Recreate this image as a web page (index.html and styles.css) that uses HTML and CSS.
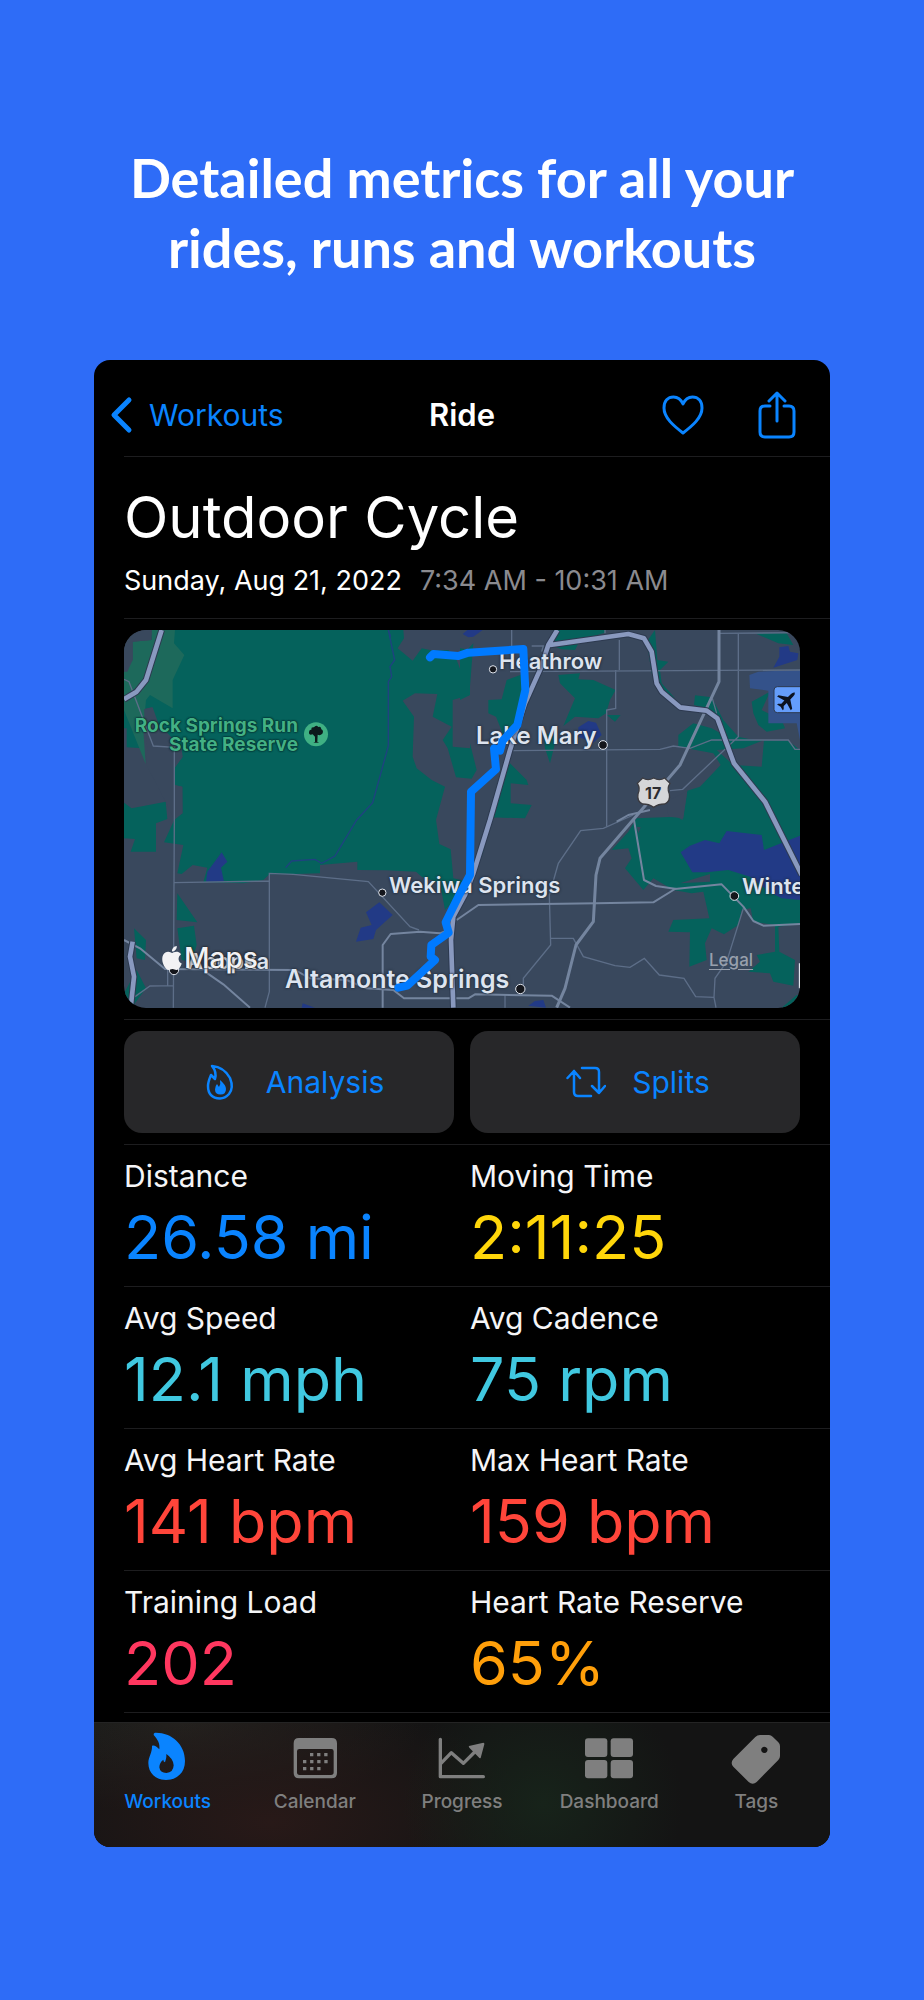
FILE: index.html
```html
<!DOCTYPE html>
<html lang="en">
<head>
  <meta charset="UTF-8">
  <meta name="viewport" content="width=device-width, initial-scale=1.0">
  <title>Outdoor Cycle</title>
  <link rel="stylesheet" href="styles.css">
</head>
<body>

  <h1 class="headline">Detailed metrics for all your<br>rides, runs and workouts</h1>

  <main class="phone">
    <header class="navbar">
      <a href="#" class="back">
        <svg width="24" height="38" viewBox="0 0 24 38"><path d="M19 4L4 19l15 15" fill="none" stroke="currentColor" stroke-width="5" stroke-linecap="round" stroke-linejoin="round"/></svg>
        Workouts
      </a>
      <h2>Ride</h2>
      <div class="nav-actions">
        <button aria-label="Favorite">
          <svg width="42" height="40" viewBox="0 0 42 40"><path d="M21 38C12 31 2 23 2 13 2 6 6 2 11.500 2 16 2 19 4.500 21 9c2-4.500 5-7 9.500-7C36 2 40 6 40 13c0 10-10 18-19 25z" fill="none" stroke="currentColor" stroke-width="3" stroke-linejoin="round"/></svg>
        </button>
        <button aria-label="Share">
          <svg width="38" height="48" viewBox="0 0 38 48"><path d="M12 15H7q-5 0-5 5v21q0 5 5 5h24q5 0 5-5V20q0-5-5-5h-5M19 30V3M11 10l8-8 8 8" fill="none" stroke="currentColor" stroke-width="3" stroke-linecap="round" stroke-linejoin="round"/></svg>
        </button>
      </div>
    </header>

    <section class="title">
      <h3>Outdoor Cycle</h3>
      <p>Sunday, Aug 21, 2022 <span>7:34 AM - 10:31 AM</span></p>
    </section>

    <section class="map-section">
      <div class="map">
        <svg class="map-art" viewBox="12 30 2028 1134" preserveAspectRatio="xMinYMin slice">
          <!-- parks -->
          <g fill="#05625c">
            <path d="M100 30H850L852 55 833 85 878 122 905 85 940 92 985 90 1010 120 1025 160 1022 110 1060 70 1048 225 998 240V380L1050 385 1050 370 1070 450 1055 476 1008 472 983 385 968 360 995 320 938 290 952 222 885 220 848 242 882 290 878 410 890 445 935 480 975 500 948 600 958 672 992 688 1000 775 1045 785 1040 800 975 870 960 790 905 770 888 755 800 751 712 750V725L600 735V760L522 762 448 763 430 780 370 790 250 786 262 743 218 735 185 762 172 760 190 675 132 667 165 595 188 580 187 500 163 495V445L188 410 150 385 120 330 95 262 60 270 40 200z"/>
            <path d="M12 548L35 565 137 545 142 597 108 610V695H32L45 657 12 655zM12 325L20 325 20 382 70 385 55 250 12 230z"/>
            <path d="M172 820L232 907 170 900zM172 925L222 917 230 975 215 1025 185 1020zM42 925L78 960 75 1020 50 1015zM50 1050L78 1105 35 1163 12 1120z"/>
            <path d="M1020 85L1050 90V225L1020 240z M1300 30H1455V38L1380 60 1365 90 1325 88 1290 75zM1315 165L1380 160 1375 178 1420 180 1487 210 1470 240 1458 280 1435 295 1365 290 1330 318 1350 270 1365 235 1320 190zM1160 180L1215 160 1215 215 1200 290 1180 330 1150 345 1128 290 1105 280 1105 240 1145 238zM1270 340L1305 345V370L1290 430 1275 385zM1170 430L1220 480 1225 495 1172 490 1172 550 1235 555 1215 595 1110 592 1085 715 1140 500zM1460 285L1502 285 1485 305z"/>
            <path d="M1580 65L1605 30 1612 120 1645 125 1620 150 1625 190 1665 235 1620 215 1595 160zM1905 40H2000L2020 75 1975 70z"/>
            <path d="M1895 245L1950 215 1925 270 1985 300 1995 325 1940 335 1915 315 1900 280z"/>
            <path d="M2040 390L2005 362 1900 360 1855 350 1810 300 1775 232 1725 226 1722 255 1760 265 1790 290 1820 350 1775 325 1720 310 1675 345V380L1780 400 1802 435 1740 500 1702 512 1688 600 1670 590 1550 595 1525 635 1475 690 1525 685 1535 715 1515 745 1570 810 1600 775 1660 810 1715 820 1750 815 1768 895 1660 900 1645 935 1710 937 1708 1040 1760 1020 1755 970 1775 925 1812 943 1855 915 1865 870 1892 865 1900 905 1965 915V995L1910 1005 1920 1025 1885 1055 1950 1060 1960 1085 2020 1097 2025 1020 1978 995 1975 920 2040 910zM1985 1163L2030 1125H2040V1163z"/>
          </g>
          <path fill="#1d695b" d="M38 65L95 60V30H165L162 70 193 105 158 180V265L90 225 78 240 70 330 77 432 12 270V155L38 120z"/>
          <path fill="#39485d" d="M12 30H95V60L38 65V120L22 155H12zM72 268L98 262 115 310 185 385 188 410 163 445V495L187 500V580L163 600 137 545 78 432 82 390zM1790 390L1870 385 1932 360 1925 440 1840 435zM1640 545L1702 512 1690 595 1645 590zM1550 620L1562 622 1555 640zM1680 790L1770 762 1770 785z"/>
          <!-- water -->
          <g fill="#223a86">
            <path d="M258 785L262 755 305 697 322 725 303 743 312 785zM778 847L818 885 768 930 760 957 708 965 722 923 755 915 738 877zM1028 42L1042 30H1088L1060 50 1045 52zM548 1150L585 1163H545zM1225 1157L1245 1143 1270 1140 1278 1163z"/>
            <path d="M1375 322L1405 303 1428 308 1445 345 1420 368 1375 350zM1978 82L2005 78 2010 95 2035 100 2032 120 1960 143 1978 110z"/>
            <path d="M1682 697L1710 677 1755 660 1798 670 1820 633 1925 645 1932 690 2040 647V840L1985 835 1950 817 1890 770 1825 750 1760 757 1717 757z"/>
          </g>
          <path fill="#34528a" d="M1888 165L1915 155 2040 150V360L2030 310H1945V212L1890 205z"/>
          <path d="M805 30L824 120 810 140 815 170 805 185V378L758 548 710 600 645 708 605 730 585 718 515 723 497 743M805 30L812 50" fill="none" stroke="#1f4280" stroke-width="4"/>
          <!-- small roads -->
          <g fill="none" stroke="#5d6e88" stroke-width="4">
            <path d="M12 178L27 185 100 378 163 382V600L160 1163M163 788L448 783M435 1163L448 1115V760L520 763 745 785 870 920 897 930M45 1130L90 1098 160 1097M143 1050V1097"/>
            <path d="M1175 30V105M1170 155L2040 150M1498 60V150M1487 150V265L1460 270V620M1180 392L1620 388 1660 378 1710 385 1775 360H2005L2025 388H2040M1797 40L2040 38M1855 40V350L1688 508 1650 512M1235 78H1270L1265 95"/>
            <path d="M1540 585L1450 625 1382 632 1315 730 1288 825 1292 975 1210 1075V1105M1292 955H1360L1390 1010 1485 1037 1530 1042 1573 1015 1618 1065 1692 1075 1727 1130 1782 1132M1870 865L1820 1025 1785 1075 1782 1132 1788 1163M1155 1125V1163M1777 235L1790 280M1455 30V40"/>
          </g>
          <g fill="none" stroke="#74859f" stroke-width="6" stroke-linejoin="round">
            <path d="M1797 30V185L1680 435 1560 575 1440 715 1428 765 1420 905 1368 975 1335 1105 1310 1163" stroke-width="9"/>
            <path d="M1010 900L1075 855 1430 850 1600 847 1665 807 1805 793 1870 860 1900 903 1930 917 2040 912M1542 600L1572 780 1608 798 1670 807M1490 605L1525 585 1590 570"/>
            <path d="M12 960L60 985 135 1047 525 1050 570 1075 680 1080 740 1105 820 1110 852 1135H1045L1065 1123 1295 1127 1350 1163M788 1163V975L812 942 900 935 960 940 985 930M255 1055L310 1093 390 1163"/>
          </g>
          <!-- highways -->
          <g fill="none" stroke-linejoin="round">
            <g stroke="#2d3a50" stroke-width="20">
              <path d="M125 30L78 180 50 215 12 238M38 965L30 1010 42 1070 32 1163M1312 30L1285 75 1262 145 1215 250 1170 390 1110 600 1060 760 1035 825 1000 890 993 960 1000 1163M1290 75L1525 42 1572 55 1595 95 1610 190 1625 215 1680 262 1760 272 1792 295 1842 430 1935 545 1960 595 2045 765"/>
            </g>
            <g stroke="#8999bf" stroke-width="14">
              <path d="M125 30L78 180 50 215 12 238M38 965L30 1010 42 1070 32 1163M1312 30L1285 75 1262 145 1215 250 1170 390 1110 600 1060 760 1035 825 1000 890 993 960 1000 1163M1290 75L1525 42 1572 55 1595 95 1610 190 1625 215 1680 262 1760 272 1792 295 1842 430 1935 545 1960 595 2045 765"/>
            </g>
          </g>
          <!-- town dots -->
          <g fill="#14161c" stroke="#dfe4ec" stroke-width="3">
            <circle cx="1119" cy="148" r="11"/>
            <circle cx="1449" cy="375" r="13"/>
            <circle cx="787" cy="818" r="11"/>
            <circle cx="1843" cy="828" r="13"/>
            <circle cx="1201" cy="1107" r="14"/>
            <circle cx="162" cy="1050" r="14"/>
          </g>
          <!-- reserve badge -->
          <circle cx="588" cy="343" r="36" fill="#3fb083"/>
          <path fill="#0b1a1c" d="M585 366V350L578 343Q566 347 567 336 568 328 574 329 573 320 582 322 588 313 595 321 604 318 604 328 612 332 607 341 600 348 593 344L592 366 598 368H580z"/>
          <!-- airport badge -->
          <rect x="1962" y="200" width="90" height="78" rx="10" fill="#649dfb" stroke="#2d3a50" stroke-width="3"/>
          <path transform="translate(2001 241) rotate(45)" fill="#0c121e" d="M0-33Q5-30 5-22V-9L29 7V13L5 6V19L12 26V30L0 27-12 30V26L-5 19V6L-29 13V7L-5-9V-22Q-5-30 0-33z"/>
          <!-- US route shield -->
          <path d="M1568 474Q1584 484 1601 474 1618 484 1634 474L1650 490Q1640 505 1648 522 1652 545 1634 552 1615 552 1601 562 1587 552 1568 552 1550 545 1554 522 1562 505 1552 490z" fill="#d5d6d8" stroke="#3b3b40" stroke-width="4"/>
          <path d="M2039 1030V1105" stroke="#dfe4ec" stroke-width="5"/>
        </svg>

        <span class="place heathrow">Heathrow</span>
        <span class="place lake-mary">Lake Mary</span>
        <span class="place wekiwa">Wekiwa Springs</span>
        <span class="place winter">Winter Springs</span>
        <span class="place altamonte">Altamonte Springs</span>
        <span class="place apopka">Apopka</span>
        <span class="reserve">Rock Springs Run<br>State Reserve</span>
        <span class="shield">17</span>

        <svg class="map-art" viewBox="12 30 2028 1134" preserveAspectRatio="xMinYMin slice">
          <path d="M930 112L940 102 1015 108 1045 98 1210 87 1216 210 1192 315 1148 362 1140 392 1122 385 1128 448 1053 515 1050 765 1015 830 977 907 986 938 934 975 932 1010 945 1020 862 1097 835 1103" fill="none" stroke="#007aff" stroke-width="24" stroke-linecap="round" stroke-linejoin="round"/>
        </svg>

        <span class="maps-logo">
          <svg width="24" height="24" viewBox="0 0 24 24"><path fill="currentColor" d="M12.152 6.896c-.948 0-2.415-1.078-3.960-1.040-2.040.027-3.910 1.183-4.961 3.014-2.117 3.675-.546 9.103 1.519 12.090 1.013 1.454 2.208 3.090 3.792 3.039 1.520-.065 2.090-.987 3.935-.987 1.831 0 2.350.987 3.960.948 1.637-.026 2.676-1.480 3.676-2.948 1.156-1.688 1.636-3.325 1.662-3.415-.039-.013-3.182-1.221-3.220-4.857-.026-3.040 2.480-4.494 2.597-4.559-1.429-2.090-3.623-2.324-4.390-2.376-2-.156-3.675 1.090-4.610 1.090zM15.530 3.830c.843-1.012 1.400-2.427 1.245-3.830-1.207.052-2.662.805-3.532 1.818-.780.896-1.454 2.338-1.273 3.714 1.338.104 2.715-.688 3.559-1.701"/></svg>
          Maps
        </span>
        <a href="#" class="legal">Legal</a>
      </div>
    </section>

    <section class="actions">
      <button>
        <svg width="40" height="36" viewBox="0 0 40 36">
          <path d="M12 2Q24 3 30 14 34 24 29 30 25 34.500 20 34.500 8 34 8 22 8 18 11 11L15 15Q17 8 12 2z" fill="none" stroke="currentColor" stroke-width="2.500" stroke-linejoin="round"/>
          <path d="M20 16Q26 21 26 25 26 30.500 20.500 30.500 15 30.500 15 25.500 15 22 17 20L19 23Q21 20 20 16z" fill="currentColor"/>
        </svg>
        Analysis
      </button>
      <button>
        <svg width="40" height="36" viewBox="0 0 40 36"><path d="M16 4H29q4 0 4 4v21M26 22l7 7 6-7M25 32H12q-4 0-4-4V7M1.500 14L8 7l6 7" fill="none" stroke="currentColor" stroke-width="2.500" stroke-linecap="round" stroke-linejoin="round"/></svg>
        Splits
      </button>
    </section>

    <dl class="metrics">
      <div class="row">
        <div><dt>Distance</dt><dd class="blue">26.58 mi</dd></div>
        <div><dt>Moving Time</dt><dd class="yellow">2:11:25</dd></div>
      </div>
      <div class="row">
        <div><dt>Avg Speed</dt><dd class="teal">12.1 mph</dd></div>
        <div><dt>Avg Cadence</dt><dd class="teal">75 rpm</dd></div>
      </div>
      <div class="row">
        <div><dt>Avg Heart Rate</dt><dd class="red">141 bpm</dd></div>
        <div><dt>Max Heart Rate</dt><dd class="red">159 bpm</dd></div>
      </div>
      <div class="row">
        <div><dt>Training Load</dt><dd class="pink">202</dd></div>
        <div><dt>Heart Rate Reserve</dt><dd class="orange">65%</dd></div>
      </div>
    </dl>

    <nav class="tabbar">
      <a href="#" class="active">
        <svg viewBox="95 96 156 156"><path fill="currentColor" fill-rule="evenodd" d="M134 98C180 96 224 130 224 183 224 218 200 240 167 240 136 240 114 219 114 189 114 170 126 158 125 137Q134 133 147 148C149 130 143 120 130 105Q129 99 134 98zM168 162C169 174 166 180 164 187Q159 185 159 179 147 188 147 202 149 219 168 219 189 218 190 196 189 176 168 162z"/></svg>
        Workouts
      </a>
      <a href="#">
        <svg viewBox="534 96 156 156"><path fill="currentColor" fill-rule="evenodd" d="M564 114H662Q678 114 678 130V219Q678 235 662 235H564Q548 235 548 219V130Q548 114 564 114zM565 147Q558 147 558 154V217Q558 225 566 225H660Q668 225 668 217V154Q668 147 661 147z"/><path d="M597 164h60M576 185h80M576 206h60" stroke="currentColor" stroke-width="10" stroke-dasharray="10 11.300"/></svg>
        Calendar
      </a>
      <a href="#">
        <svg viewBox="978 96 156 156"><path d="M991 118V230H1120M993 190L1024 158 1060 190 1100 150" fill="none" stroke="currentColor" stroke-width="10" stroke-linecap="round" stroke-linejoin="round"/><path fill="currentColor" d="M1077 138L1120 128Q1124 128 1123 133L1112 174Q1109 176 1106 172L1078 143Q1075 140 1077 138z"/></svg>
        Progress
      </a>
      <a href="#">
        <svg viewBox="338 96 156 156" fill="currentColor"><rect x="344" y="115" width="67" height="56" rx="9"/><rect x="421" y="115" width="67" height="56" rx="9"/><rect x="344" y="180" width="67" height="55" rx="9"/><rect x="421" y="180" width="67" height="55" rx="9"/></svg>
        Dashboard
      </a>
      <a href="#">
        <svg viewBox="782 96 156 156"><path fill="currentColor" fill-rule="evenodd" d="M872 105H899Q905 105 910 110L927 127Q932 132 932 138V168Q932 175 927 180L862 246Q850 256 838 246L792 200Q782 189 792 177L858 111Q864 105 872 105zM885 140a9.500 9.500 0 1 0 .1 0z"/></svg>
        Tags
      </a>
    </nav>
  </main>

</body>
</html>
```
FILE: styles.css
```css
* {
  box-sizing: border-box;
}

body {
  margin: 0;
  padding: 143px 94px 0;
  min-height: 100vh;
  background: #2e6cf7;
  color: #fff;
  font-family: Inter, "Liberation Sans", sans-serif;
}

h1, h2, h3, p, dl, dd {
  margin: 0;
}

a {
  color: inherit;
  text-decoration: none;
}

button {
  padding: 0;
  border: none;
  background: none;
  color: #0a84ff;
  font: inherit;
  cursor: pointer;
}

svg {
  display: block;
}

.headline {
  margin: 0 -40px 77px;
  font-family: Lato, sans-serif;
  font-size: 54px;
  font-weight: 700;
  line-height: 70px;
  text-align: center;
}

.phone {
  background: #000;
  border-radius: 16px;
  overflow: hidden;
}

/* top bar */
.navbar {
  display: grid;
  grid-template-columns: 1fr auto 1fr;
  align-items: center;
  height: 96px;
  padding: 13px 16px 0;
  font-size: 30px;
}

.navbar h2 {
  font-size: 31px;
  font-weight: 600;
}

.back {
  display: flex;
  align-items: center;
  gap: 15px;
  color: #0a84ff;
}

.nav-actions {
  display: flex;
  justify-content: flex-end;
  align-items: center;
  gap: 54px;
  padding-right: 18px;
}

.title, .map-section, .actions, .row {
  margin-left: 30px;
  padding-right: 30px;
  border-bottom: 1px solid #1d1d1f;
}

.title {
  padding-top: 24px;
  padding-bottom: 20px;
  border-top: 1px solid #1d1d1f;
}

.title h3 {
  margin-bottom: 11px;
  font-size: 58px;
  font-weight: 400;
  line-height: 72px;
}

.title p {
  display: flex;
  gap: 18px;
  font-size: 27px;
  line-height: 34px;
}

.title span {
  color: #8a8a8f;
}

/* map */
.map-section {
  padding-top: 11px;
  padding-bottom: 11px;
}

.map {
  position: relative;
  height: 378px;
  border-radius: 22px;
  overflow: hidden;
  background: #39485d;
}

.map-art {
  position: absolute;
  top: 0;
  left: 0;
  width: 100%;
  height: 100%;
}

.place, .reserve, .shield, .maps-logo, .legal {
  position: absolute;
  white-space: nowrap;
}

.place {
  color: #dde4ef;
  font-size: 22px;
  font-weight: 600;
  line-height: 24px;
  text-shadow: 0 0 3px #222c3c, 0 0 2px #222c3c;
}

.heathrow {
  left: 375px;
  top: 19px;
}

.lake-mary {
  left: 352px;
  top: 94px;
  font-size: 24px;
}

.wekiwa {
  left: 265px;
  top: 243px;
}

.winter {
  left: 618px;
  top: 244px;
}

.altamonte {
  left: 161px;
  top: 337px;
  font-size: 25px;
}

.apopka {
  left: 63px;
  top: 319px;
}

.reserve {
  right: 502px;
  top: 86px;
  color: #43b184;
  font-size: 19px;
  font-weight: 700;
  line-height: 19px;
  text-align: right;
  text-shadow: 0 0 2px #06282a, 0 0 2px #06282a, 0 0 1px #06282a;
}

.shield {
  left: 521px;
  top: 153px;
  color: #2c2c30;
  font-size: 16px;
  font-weight: 700;
  line-height: 20px;
}

.maps-logo {
  left: 36px;
  top: 311px;
  display: flex;
  align-items: center;
  color: #f2f2f4;
  font-size: 28px;
  font-weight: 500;
  line-height: 34px;
  text-shadow: 0 0 3px #222, 0 0 2px #222;
}

.legal {
  left: 585px;
  top: 320px;
  color: #98a0ad;
  font-size: 17px;
  font-weight: 500;
  line-height: 20px;
  text-decoration: underline;
  text-underline-offset: 3px;
}

/* analysis / splits */
.actions {
  display: grid;
  grid-template-columns: 1fr 1fr;
  gap: 16px;
  padding-top: 11px;
  padding-bottom: 11px;
}

.actions button {
  display: flex;
  justify-content: center;
  align-items: center;
  gap: 26px;
  height: 102px;
  padding-left: 6px;
  border-radius: 18px;
  background: #272729;
  font-size: 30px;
}

/* metrics */
.row {
  display: grid;
  grid-template-columns: 1fr 1fr;
  gap: 16px;
  padding-top: 13px;
  padding-bottom: 13px;
}

.row dt {
  margin-bottom: 7px;
  font-size: 30px;
  line-height: 36px;
  color: #f5f5f7;
}

.row dd {
  font-size: 61px;
  line-height: 72px;
}

.blue { color: #0a84ff; }
.yellow { color: #ffd60a; }
.teal { color: #40c8e0; }
.red { color: #ff453a; }
.pink { color: #ff375f; }
.orange { color: #ff9f0a; }

/* bottom tabs */
.tabbar {
  display: grid;
  grid-template-columns: repeat(5, 1fr);
  margin-top: 9px;
  padding: 9px 0 33px;
  border-top: 1px solid #242424;
  background:
    radial-gradient(140px 130px at 61% 65%, #17231a 0%, transparent 100%),
    radial-gradient(260px 130px at 24% 80%, #281918 0%, transparent 100%),
    radial-gradient(240px 90px at 12% 0%, #22221f 0%, transparent 100%),
    #141414;
}

.tabbar a {
  display: flex;
  flex-direction: column;
  align-items: center;
  gap: 6px;
  color: #7f7f7f;
  font-size: 19px;
  font-weight: 500;
  line-height: 24px;
}

.tabbar .active {
  color: #0a84ff;
}

.tabbar svg {
  width: 52px;
  height: 52px;
}
```
